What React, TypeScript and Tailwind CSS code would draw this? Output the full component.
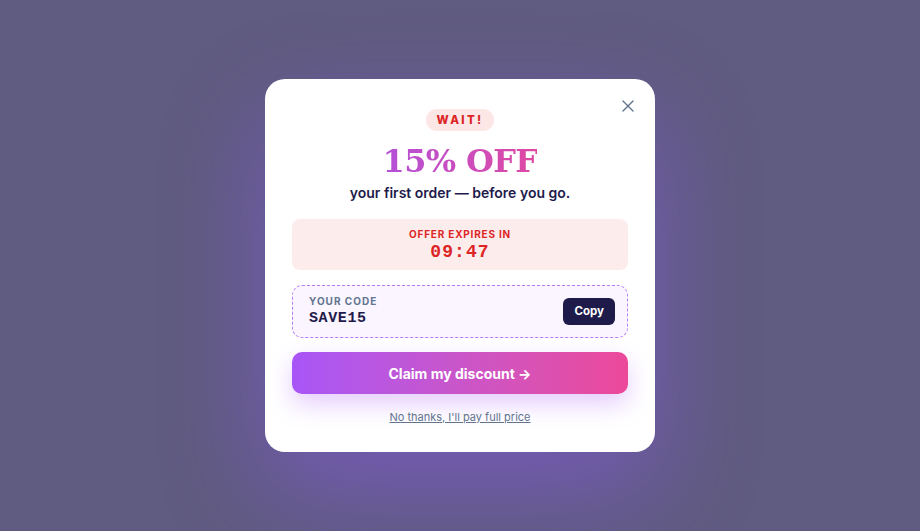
import { X } from 'lucide-react';

export default function App() {
  return (
    <div className="flex h-screen w-full items-center justify-center bg-[#605b80] font-['Inter',sans-serif]">
      <div className="relative w-[390px] rounded-[20px] bg-white px-[27px] pt-[30px] pb-[27px] text-center shadow-[0_40px_100px_rgba(139,92,246,0.45)]">
        <button className="absolute right-[17px] top-[17px] text-slate-500">
          <X size={20} strokeWidth={1.6} />
        </button>

        <div className="flex justify-center">
          <span className="rounded-full bg-[#fde6e6] px-[11px] py-[3px] text-[11.5px] font-extrabold leading-[16px] tracking-[0.2em] text-[#dc2626]">
            WAIT!
          </span>
        </div>

        <h1 className="mt-[10px] font-['DejaVu_Serif',serif] text-[32px] font-bold leading-[40px] tracking-[-0.02em]">
          <span className="bg-gradient-to-r from-[#b44fd8] to-[#df47a2] bg-clip-text text-transparent">15% OFF</span>
        </h1>
        <p className="mt-[2px] text-[14px] font-semibold leading-[20px] text-[#1e1b4b]">your first order — before you go.</p>

        <div className="mt-[16px] rounded-[8px] bg-[#fdecec] py-[8px]">
          <p className="text-[10px] font-bold leading-[14px] tracking-[0.08em] text-[#dc2626]">OFFER EXPIRES IN</p>
          <p className="mt-[2px] font-['Liberation_Mono',monospace] text-[18px] font-bold leading-[19px] tracking-[0.06em] text-[#dc2626]">
            09:47
          </p>
        </div>

        <div className="mt-[15px] flex items-center justify-between rounded-[10px] border border-dashed border-[#b77cf7] bg-[#faf5ff] py-[9px] pl-[16px] pr-[12px] text-left">
          <div>
            <p className="text-[10px] font-bold leading-[12px] tracking-[0.1em] text-slate-500">YOUR CODE</p>
            <p className="mt-[3px] font-['Liberation_Mono',monospace] text-[15px] font-bold leading-[18px] tracking-[0.04em] text-[#1e1b4b]">
              SAVE15
            </p>
          </div>
          <button className="rounded-[6px] bg-[#1e1b4b] px-[11px] py-[6px] text-[11.5px] font-bold leading-[15px] text-white">Copy</button>
        </div>

        <button className="mt-[14px] flex h-[42px] w-full items-center justify-center rounded-[10px] bg-gradient-to-r from-[#a855f7] to-[#ec4899] text-[14px] font-bold text-white shadow-[0_10px_24px_rgba(168,85,247,0.3)]">
          Claim my discount →
        </button>

        <a href="#" className="mt-[15px] block text-[11px] leading-[16px] text-slate-500 underline">
          No thanks, I'll pay full price
        </a>
      </div>
    </div>
  );
}
